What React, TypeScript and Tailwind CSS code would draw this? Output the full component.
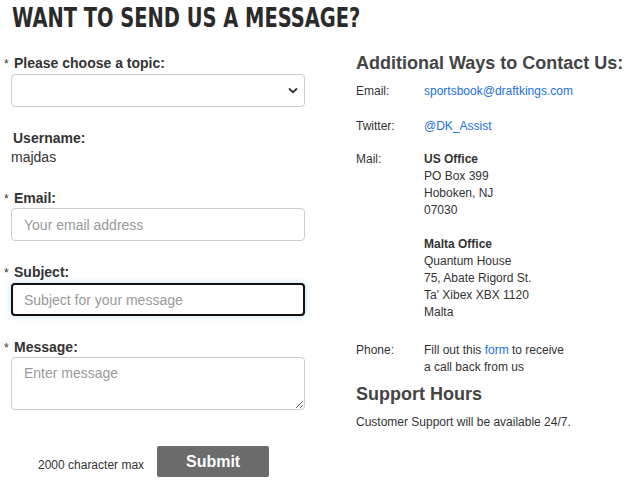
import React from 'react';

const Label = ({ text, required = true }: { text: string; required?: boolean }) => (
  <div className="flex items-baseline h-[17px] leading-[17px]">
    <span className="w-[14px] pl-[4px] text-[12px] text-[#333]">{required ? '*' : ''}</span>
    <span className="text-[14px] font-bold text-[#333]">{text}</span>
  </div>
);

const inputCls =
  "w-[294px] h-[33px] ml-[11px] rounded-[4px] border border-[#ccc] bg-white px-[12px] text-[14px] text-[#555] placeholder:text-[#999] outline-none";

export default function App() {
  return (
    <div className="w-[625px] h-[480px] bg-white overflow-hidden font-['Liberation_Sans',Arial,sans-serif] text-[#333]">
      <div className="pl-[12px] pt-[5px] h-[30px]">
        <h1 className="inline-block origin-left scale-x-[0.8] leading-[26px] text-[27px] font-black text-[#2a2a2a] font-['DejaVu_Sans_Condensed',sans-serif] whitespace-nowrap">
          WANT TO SEND US A MESSAGE?
        </h1>
      </div>

      <div className="flex">
        <div className="w-[350px] pt-[25px]">
          <Label text="Please choose a topic:" />
          <div className="relative mt-[2px]">
            <select className={inputCls + " appearance-none"} defaultValue="">
              <option value=""></option>
            </select>
            <svg className="absolute left-[288px] top-[13px]" width="10" height="7" viewBox="0 0 10 7">
              <path d="M1 1.5 L5 5.2 L9 1.5" fill="none" stroke="#333" strokeWidth="1.8" />
            </svg>
          </div>

          <div className="mt-[23px] pl-[13px] text-[14px] font-bold leading-[17px] h-[17px]">Username:</div>
          <div className="pl-[11px] mt-[2px] text-[14px] leading-[17px] text-[#333]">majdas</div>

          <div className="mt-[24px]"><Label text="Email:" /></div>
          <input className={inputCls + " mt-[1px] block"} placeholder="Your email address" />

          <div className="mt-[23px]"><Label text="Subject:" /></div>
          <input
            className="block mt-[2px] w-[294px] h-[33px] ml-[11px] rounded-[4px] border-2 border-[#111] bg-white px-[11px] text-[14px] placeholder:text-[#999] outline-none shadow-[0_0_6px_rgba(102,175,233,0.45)]"
            placeholder="Subject for your message"
          />

          <div className="mt-[23px]"><Label text="Message:" /></div>
          <textarea
            className="block mt-[1px] w-[294px] h-[53px] ml-[11px] rounded-[4px] border border-[#ccc] bg-white px-[12px] py-[5px] text-[14px] leading-[20px] placeholder:text-[#999] outline-none"
            placeholder="Enter message"
          />

          <div className="mt-[36px] flex items-center">
            <span className="ml-[38px] text-[12px] text-[#333] mt-[6px]">2000 character max</span>
            <button className="ml-[13px] w-[112px] h-[31px] rounded-[2px] bg-[#6b6b6b] text-white text-[16px] font-bold">Submit</button>
          </div>
        </div>

        <div className="pl-[6px] pt-[22px] text-[12px] leading-[17px] text-[#333]">
          <h2 className="text-[18px] font-bold text-[#444] leading-[22px] whitespace-nowrap">Additional Ways to Contact Us:</h2>
          <div className="mt-[9px] flex">
            <span className="w-[68px]">Email:</span>
            <span className="text-[#1a6fe0]">sportsbook@draftkings.com</span>
          </div>
          <div className="mt-[18px] flex">
            <span className="w-[68px]">Twitter:</span>
            <span className="text-[#1a6fe0]">@DK_Assist</span>
          </div>
          <div className="mt-[16px] flex">
            <span className="w-[68px]">Mail:</span>
            <div>
              <div className="font-bold">US Office</div>
              <div>PO Box 399</div>
              <div>Hoboken, NJ</div>
              <div>07030</div>
              <div className="mt-[17px] font-bold">Malta Office</div>
              <div>Quantum House</div>
              <div>75, Abate Rigord St.</div>
              <div>Ta' Xibex XBX 1120</div>
              <div>Malta</div>
            </div>
          </div>
          <div className="mt-[21px] flex">
            <span className="w-[68px]">Phone:</span>
            <div>
              <div>Fill out this <span className="text-[#1a6fe0]">form</span> to receive</div>
              <div>a call back from us</div>
            </div>
          </div>
          <h2 className="mt-[7px] text-[18px] font-bold text-[#444] leading-[22px]">Support Hours</h2>
          <div className="mt-[9px]">Customer Support will be available 24/7.</div>
        </div>
      </div>
    </div>
  );
}
